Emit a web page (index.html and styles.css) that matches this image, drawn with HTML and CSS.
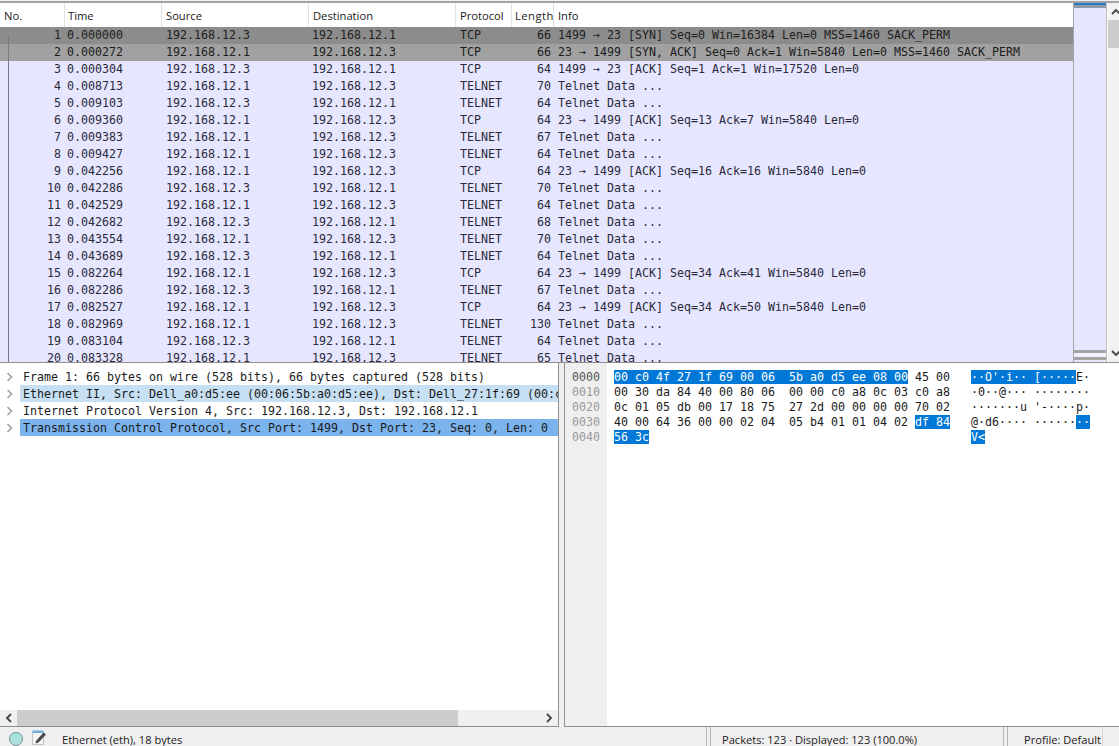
FILE: index.html
```html
<!DOCTYPE html>
<html lang="en">
<head>
<meta charset="utf-8">
<title>Wireshark</title>
<link rel="stylesheet" href="styles.css">
</head>
<body>
<div class="app">
  <section class="top">
    <div class="list">
      <div class="head">
        <div class="c no h">No.</div><div class="c time h">Time</div><div class="c src h">Source</div><div class="c dst h">Destination</div><div class="c proto h">Protocol</div><div class="c len h">Length</div><div class="c info h">Info</div>
      </div>
      <div class="rows">
        <div class="bracket"></div>
        <div class="row sel1"><div class="c no">1</div><div class="c time">0.000000</div><div class="c src">192.168.12.3</div><div class="c dst">192.168.12.1</div><div class="c proto">TCP</div><div class="c len">66</div><div class="c info">1499 → 23 [SYN] Seq=0 Win=16384 Len=0 MSS=1460 SACK_PERM</div></div>
        <div class="row sel2"><div class="c no">2</div><div class="c time">0.000272</div><div class="c src">192.168.12.1</div><div class="c dst">192.168.12.3</div><div class="c proto">TCP</div><div class="c len">66</div><div class="c info">23 → 1499 [SYN, ACK] Seq=0 Ack=1 Win=5840 Len=0 MSS=1460 SACK_PERM</div></div>
        <div class="row"><div class="c no">3</div><div class="c time">0.000304</div><div class="c src">192.168.12.3</div><div class="c dst">192.168.12.1</div><div class="c proto">TCP</div><div class="c len">64</div><div class="c info">1499 → 23 [ACK] Seq=1 Ack=1 Win=17520 Len=0</div></div>
        <div class="row"><div class="c no">4</div><div class="c time">0.008713</div><div class="c src">192.168.12.1</div><div class="c dst">192.168.12.3</div><div class="c proto">TELNET</div><div class="c len">70</div><div class="c info">Telnet Data ...</div></div>
        <div class="row"><div class="c no">5</div><div class="c time">0.009103</div><div class="c src">192.168.12.3</div><div class="c dst">192.168.12.1</div><div class="c proto">TELNET</div><div class="c len">64</div><div class="c info">Telnet Data ...</div></div>
        <div class="row"><div class="c no">6</div><div class="c time">0.009360</div><div class="c src">192.168.12.1</div><div class="c dst">192.168.12.3</div><div class="c proto">TCP</div><div class="c len">64</div><div class="c info">23 → 1499 [ACK] Seq=13 Ack=7 Win=5840 Len=0</div></div>
        <div class="row"><div class="c no">7</div><div class="c time">0.009383</div><div class="c src">192.168.12.1</div><div class="c dst">192.168.12.3</div><div class="c proto">TELNET</div><div class="c len">67</div><div class="c info">Telnet Data ...</div></div>
        <div class="row"><div class="c no">8</div><div class="c time">0.009427</div><div class="c src">192.168.12.1</div><div class="c dst">192.168.12.3</div><div class="c proto">TELNET</div><div class="c len">64</div><div class="c info">Telnet Data ...</div></div>
        <div class="row"><div class="c no">9</div><div class="c time">0.042256</div><div class="c src">192.168.12.1</div><div class="c dst">192.168.12.3</div><div class="c proto">TCP</div><div class="c len">64</div><div class="c info">23 → 1499 [ACK] Seq=16 Ack=16 Win=5840 Len=0</div></div>
        <div class="row"><div class="c no">10</div><div class="c time">0.042286</div><div class="c src">192.168.12.3</div><div class="c dst">192.168.12.1</div><div class="c proto">TELNET</div><div class="c len">70</div><div class="c info">Telnet Data ...</div></div>
        <div class="row"><div class="c no">11</div><div class="c time">0.042529</div><div class="c src">192.168.12.1</div><div class="c dst">192.168.12.3</div><div class="c proto">TELNET</div><div class="c len">64</div><div class="c info">Telnet Data ...</div></div>
        <div class="row"><div class="c no">12</div><div class="c time">0.042682</div><div class="c src">192.168.12.3</div><div class="c dst">192.168.12.1</div><div class="c proto">TELNET</div><div class="c len">68</div><div class="c info">Telnet Data ...</div></div>
        <div class="row"><div class="c no">13</div><div class="c time">0.043554</div><div class="c src">192.168.12.1</div><div class="c dst">192.168.12.3</div><div class="c proto">TELNET</div><div class="c len">70</div><div class="c info">Telnet Data ...</div></div>
        <div class="row"><div class="c no">14</div><div class="c time">0.043689</div><div class="c src">192.168.12.3</div><div class="c dst">192.168.12.1</div><div class="c proto">TELNET</div><div class="c len">64</div><div class="c info">Telnet Data ...</div></div>
        <div class="row"><div class="c no">15</div><div class="c time">0.082264</div><div class="c src">192.168.12.1</div><div class="c dst">192.168.12.3</div><div class="c proto">TCP</div><div class="c len">64</div><div class="c info">23 → 1499 [ACK] Seq=34 Ack=41 Win=5840 Len=0</div></div>
        <div class="row"><div class="c no">16</div><div class="c time">0.082286</div><div class="c src">192.168.12.3</div><div class="c dst">192.168.12.1</div><div class="c proto">TELNET</div><div class="c len">67</div><div class="c info">Telnet Data ...</div></div>
        <div class="row"><div class="c no">17</div><div class="c time">0.082527</div><div class="c src">192.168.12.1</div><div class="c dst">192.168.12.3</div><div class="c proto">TCP</div><div class="c len">64</div><div class="c info">23 → 1499 [ACK] Seq=34 Ack=50 Win=5840 Len=0</div></div>
        <div class="row"><div class="c no">18</div><div class="c time">0.082969</div><div class="c src">192.168.12.1</div><div class="c dst">192.168.12.3</div><div class="c proto">TELNET</div><div class="c len">130</div><div class="c info">Telnet Data ...</div></div>
        <div class="row"><div class="c no">19</div><div class="c time">0.083104</div><div class="c src">192.168.12.3</div><div class="c dst">192.168.12.1</div><div class="c proto">TELNET</div><div class="c len">64</div><div class="c info">Telnet Data ...</div></div>
        <div class="row"><div class="c no">20</div><div class="c time">0.083328</div><div class="c src">192.168.12.1</div><div class="c dst">192.168.12.3</div><div class="c proto">TELNET</div><div class="c len">65</div><div class="c info">Telnet Data ...</div></div>
      </div>
    </div>
    <div class="minimap"><div class="tick-blue"></div><div class="tick-gray"></div><div class="mini-fill"></div><div class="band"></div><div class="band-gap"></div><div class="band"></div></div>
    <div class="vscroll">
      <div class="arrow-v"><svg width="10" height="7" viewBox="0 0 10 7"><path d="M1 6 L5 2 L9 6" fill="none" stroke="#444" stroke-width="1.8"/></svg></div>
      <div class="vthumb"></div>
      <div class="vtrack"></div>
      <div class="arrow-v"><svg width="10" height="7" viewBox="0 0 10 7"><path d="M1 1 L5 5 L9 1" fill="none" stroke="#444" stroke-width="1.8"/></svg></div>
    </div>
  </section>

  <section class="bottom">
    <div class="tree-pane">
      <div class="tree">
        <div class="node"><svg class="chev" width="7" height="10" viewBox="0 0 7 10"><path d="M1.5 1 L5.5 5 L1.5 9" fill="none" stroke="#a4a4a4" stroke-width="1.7"/></svg><div class="label">Frame 1: 66 bytes on wire (528 bits), 66 bytes captured (528 bits)</div></div>
        <div class="node"><svg class="chev" width="7" height="10" viewBox="0 0 7 10"><path d="M1.5 1 L5.5 5 L1.5 9" fill="none" stroke="#a4a4a4" stroke-width="1.7"/></svg><div class="label eth">Ethernet II, Src: Dell_a0:d5:ee (00:06:5b:a0:d5:ee), Dst: Dell_27:1f:69 (00:c0:4f:27:1f:69)</div></div>
        <div class="node"><svg class="chev" width="7" height="10" viewBox="0 0 7 10"><path d="M1.5 1 L5.5 5 L1.5 9" fill="none" stroke="#a4a4a4" stroke-width="1.7"/></svg><div class="label">Internet Protocol Version 4, Src: 192.168.12.3, Dst: 192.168.12.1</div></div>
        <div class="node"><svg class="chev" width="7" height="10" viewBox="0 0 7 10"><path d="M1.5 1 L5.5 5 L1.5 9" fill="none" stroke="#a4a4a4" stroke-width="1.7"/></svg><div class="label tcp">Transmission Control Protocol, Src Port: 1499, Dst Port: 23, Seq: 0, Len: 0</div></div>
      </div>
      <div class="hscroll">
        <div class="arrow-h"><svg width="7" height="10" viewBox="0 0 7 10"><path d="M6 1 L2 5 L6 9" fill="none" stroke="#444" stroke-width="1.8"/></svg></div>
        <div class="hthumb"></div>
        <div class="htrack"></div>
        <div class="arrow-h"><svg width="7" height="10" viewBox="0 0 7 10"><path d="M1 1 L5 5 L1 9" fill="none" stroke="#444" stroke-width="1.8"/></svg></div>
      </div>
    </div>
    <div class="hex-pane">
      <div class="offsets"><div class="off first">0000</div><div class="off">0010</div><div class="off">0020</div><div class="off">0030</div><div class="off">0040</div></div>
      <div class="bytes">
        <div class="hexline"><div class="hx"><span class="hi">00 c0 4f 27 1f 69 00 06  5b a0 d5 ee 08 00</span> 45 00</div><div class="as"><span class="hi">··O'·i·· [·····</span>E·</div></div>
        <div class="hexline"><div class="hx">00 30 da 84 40 00 80 06  00 00 c0 a8 0c 03 c0 a8</div><div class="as">·0··@··· ········</div></div>
        <div class="hexline"><div class="hx">0c 01 05 db 00 17 18 75  27 2d 00 00 00 00 70 02</div><div class="as">·······u '-····p·</div></div>
        <div class="hexline"><div class="hx">40 00 64 36 00 00 02 04  05 b4 01 01 04 02 <span class="hi">df 84</span></div><div class="as">@·d6···· ······<span class="hi">··</span></div></div>
        <div class="hexline"><div class="hx"><span class="hi">56 3c</span></div><div class="as"><span class="hi">V&lt;</span></div></div>
      </div>
    </div>
  </section>

  <footer class="status">
    <div class="dot"></div>
    <svg class="note" width="15" height="15" viewBox="0 0 15 15"><rect x="0.5" y="2.5" width="11" height="12" fill="#f6f6f6" stroke="#c4c4c4"/><rect x="0.5" y="0.5" width="11" height="2.5" fill="#6fb0dc"/><path d="M4 11 L11.5 2.5 L14 4.5 L6.5 12.5 L3.5 13.5 Z" fill="#474747"/></svg>
    <div class="s-main">Ethernet (eth), 18 bytes</div>
    <div class="grip"></div>
    <div class="s-packets">Packets: 123 · Displayed: 123 (100.0%)</div>
    <div class="grip"></div>
    <div class="s-profile">Profile: Default</div>
    <div class="grip-end"></div>
  </footer>
</div>
</body>
</html>
```
FILE: styles.css
```css
* { box-sizing: border-box; }
html, body { margin: 0; padding: 0; }
body { width: 1119px; height: 746px; overflow: hidden; background: #f0eff0; }
.app { width: 1119px; height: 746px; display: flex; flex-direction: column; overflow: hidden; border-top: 1px solid #f0eff0; }

.top { height: 362px; flex: none; display: flex; border-top: 2px solid #a4a4a4; border-bottom: 1px solid #8f8f8f; background: #fff; }
.list { width: 1073px; flex: none; display: flex; flex-direction: column; overflow: hidden; }
.head { height: 24px; flex: none; display: flex; background: #fff; font: 11.2px/26px "Open Sans", "Noto Sans", sans-serif; color: #1a1a1a; }
.rows { position: relative; flex: 1; overflow: hidden; font: 11.63px/17px "DejaVu Sans Mono", monospace; background: #e7e6ff; }
.row { height: 17px; display: flex; background: #e7e6ff; color: #2a2a3a; }
.sel1 { background: #8c8c8c; color: #202020; }
.sel2 { background: #a1a1a1; color: #1c1c1c; }
.bracket { position: absolute; left: 8px; top: 9px; bottom: 0; width: 1px; background: #7a7a86; z-index: 1; }

.c { flex: none; white-space: pre; overflow: hidden; }
.h + .h { border-left: 1px solid #e2e2e2; }
.no { width: 64px; padding: 0 3px 0 4px; text-align: right; }
.no.h { text-align: left; }
.time { width: 97px; padding-left: 3px; }
.src { width: 147px; padding-left: 5px; }
.src.h { padding-left: 4px; }
.dst { width: 147px; padding-left: 4px; }
.proto { width: 56px; padding-left: 5px; }
.proto.h { padding-left: 4px; }
.len { width: 42px; padding: 0 2px 0 0; text-align: right; }
.len.h { padding: 0 0 0 3px; text-align: left; letter-spacing: .5px; }
.info { flex: 1; padding-left: 5px; }
.info.h { padding-left: 4px; }

.minimap { width: 34px; flex: none; display: flex; flex-direction: column; background: #e7e6ff; border-left: 1px solid #a4a4a4; border-right: 1px solid #bdbdbd; }
.tick-blue { height: 2px; background: #2a78c8; flex: none; }
.tick-gray { height: 3px; background: #8e9aa8; flex: none; }
.mini-fill { flex: 1; }
.band { height: 3px; flex: none; background: #a4a4a4; }
.band-gap { height: 4px; flex: none; background: #f1f0ff; }
.minimap .band:last-child { margin-bottom: 2px; }

.vscroll { width: 11px; margin-left: 1px; flex: none; display: flex; flex-direction: column; background: #f3f2f3; overflow: hidden; }
.arrow-v { width: 15px; height: 17px; flex: none; display: flex; align-items: center; justify-content: center; }
.vthumb { height: 28px; flex: none; background: #cdcdcd; }
.vtrack { flex: 1; }

.bottom { flex: 1; min-height: 0; display: flex; gap: 5px; }
.tree-pane { width: 559px; flex: none; display: flex; flex-direction: column; background: #fff; border-right: 1px solid #8f8f8f; border-bottom: 1px solid #8f8f8f; }
.tree { flex: 1; min-height: 0; padding-top: 5px; overflow: hidden; font: 11.63px/19px "DejaVu Sans Mono", monospace; color: #1a1a1a; }
.node { height: 17px; display: flex; align-items: center; overflow: hidden; }
.chev { flex: none; margin: 0 7px 0 6px; width: 7px; }
.label { flex: none; width: 538px; padding-left: 3px; white-space: pre; overflow: hidden; height: 17px; }
.eth { background: #c6dff3; }
.tcp { background: #7bb3ec; }
.hscroll { height: 16px; flex: none; display: flex; background: #f0f0f0; }
.arrow-h { width: 17px; flex: none; display: flex; align-items: center; justify-content: center; }
.hthumb { width: 441px; flex: none; background: #cdcdcd; }
.htrack { flex: 1; }

.hex-pane { flex: 1; min-width: 0; display: flex; background: #fff; border-left: 1px solid #8f8f8f; border-bottom: 1px solid #8f8f8f; font: 11.63px/15px "DejaVu Sans Mono", monospace; color: #1a1a1a; }
.offsets { width: 42px; flex: none; background: #f0eff0; padding: 7px 0 0 7px; color: #9a9a9a; }
.off.first { color: #555; }
.bytes { flex: 1; padding: 7px 0 0 7px; }
.hexline { height: 15px; display: flex; }
.hx { width: 357px; flex: none; white-space: pre; }
.as { flex: none; white-space: pre; }
.hi { background: #0078d7; color: #fff; }

.status { height: 19px; flex: none; display: flex; align-items: flex-start; background: #f0eff0; font: 11.1px/25px "Open Sans", "Noto Sans", sans-serif; color: #222; overflow: hidden; }
.dot { width: 14px; height: 14px; flex: none; margin: 5px 0 0 9px; border-radius: 50%; background: #a9e2dc; border: 1px solid #6f8f90; }
.note { flex: none; margin: 3px 0 0 9px; }
.s-main { width: 644px; flex: none; margin-left: 15px; }
.grip { width: 5px; height: 19px; flex: none; border-left: 1px solid #b4b4b4; border-right: 1px solid #b4b4b4; }
.s-packets { width: 292px; flex: none; padding-left: 11px; white-space: pre; }
.s-profile { width: 94px; flex: none; padding-left: 16px; white-space: pre; }
.grip-end { width: 1px; height: 19px; flex: none; background: #d6d6d6; }
```
